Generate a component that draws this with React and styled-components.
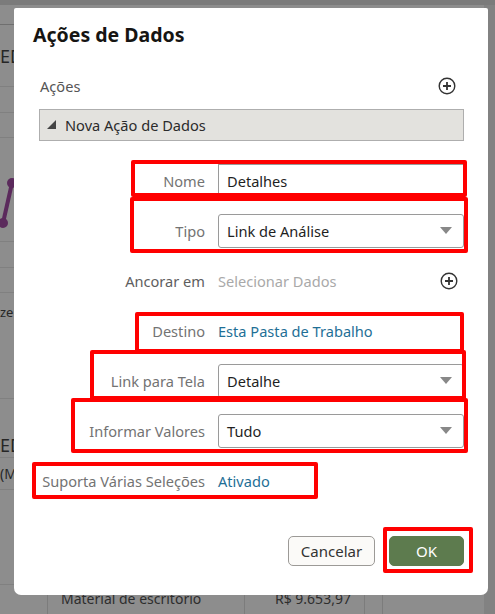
import React from "react";
import styled, { createGlobalStyle } from "styled-components";

const Global = createGlobalStyle`
  html, body { margin: 0; padding: 0; }
  body { width: 495px; height: 614px; overflow: hidden; font-family: "Noto Sans", "Open Sans", sans-serif; }
  * { box-sizing: border-box; }
`;

const Page = styled.div`
  position: relative;
  width: 495px;
  height: 614px;
  overflow: hidden;
  background: #8d8d8d;
  display: grid;
  grid-template-columns: 1fr 11px;
`;

const BgMain = styled.div`
  display: flex;
  flex-direction: column;
`;

const BgStrip = styled.div`
  background: #828282;
  border-top: 5px solid #7b7b7b;
`;

const BgTop = styled.div`
  height: 5px;
  background: #7b7b7b;
  flex: none;
`;

const BgRow = styled.div`
  height: ${(p) => p.$h}px;
  flex: none;
  border-bottom: 1px solid ${(p) => (p.$dark ? "#6f6f6f" : "#808080")};
  display: flex;
  align-items: ${(p) => p.$align || "center"};
  padding-top: ${(p) => p.$pt || 0}px;
  color: #262626;
  font-size: ${(p) => p.$fs || 14}px;
  overflow: hidden;
  white-space: nowrap;
`;

const BgTableRow = styled.div`
  flex: 1;
  display: grid;
  grid-template-columns: 48px 197px 120px 18px 1fr;
  color: #2e2e2e;
  font-size: 14px;
`;

const BgCell = styled.div`
  border-right: 1px solid #7c7c7c;
  padding: 4px 0 0 ${(p) => p.$pl || 0}px;
  white-space: nowrap;
`;

const Dialog = styled.div`
  position: absolute;
  left: 14px;
  top: 8px;
  width: 474px;
  height: 587px;
  background: #ffffff;
  border-radius: 2px 2px 7px 7px;
  display: flex;
  flex-direction: column;
  padding: 0 24px 0 25px;
`;

const Title = styled.h1`
  margin: 15px 0 0 -6px;
  font-size: 19.5px;
  font-weight: 700;
  color: #161513;
  line-height: 24px;
`;

const SectionHead = styled.div`
  margin-top: 25px;
  height: 28px;
  display: flex;
  align-items: center;
  justify-content: space-between;
  padding-left: 1px;
  padding-right: 8px;
  font-size: 14.6px;
  color: #555;
`;

const Collapsible = styled.div`
  margin-top: 9px;
  height: 32px;
  background: #e3e2de;
  border: 1px solid #aeaeae;
  display: flex;
  align-items: center;
  gap: 8px;
  padding-left: 7px;
  font-size: 14.6px;
  color: #2b2b2b;
`;

const Form = styled.div`
  margin-top: 23px;
  display: grid;
  grid-template-columns: 166px 1fr;
  grid-auto-rows: 34px;
  column-gap: 13px;
  row-gap: 16px;
  font-size: 14.6px;
`;

const Label = styled.div`
  display: flex;
  align-items: center;
  justify-content: flex-end;
  color: ${(p) => (p.$dark ? "#5e5e5e" : "#737373")};
  white-space: nowrap;
`;

const Field = styled.div`
  display: flex;
  align-items: center;
  justify-content: space-between;
  padding: 0 11px 0 8px;
  border: 1px solid #9a9a9a;
  border-radius: ${(p) => (p.$plain ? 0 : 3)}px;
  color: #1f1f1f;
  background: #fff;
`;

const Value = styled.div`
  display: flex;
  align-items: center;
  justify-content: space-between;
  padding-right: 6px;
  color: ${(p) => p.$color};
  white-space: nowrap;
`;

const Footer = styled.div`
  margin-top: auto;
  margin-bottom: 29px;
  display: flex;
  justify-content: flex-end;
  gap: 14px;
`;

const Button = styled.button`
  height: 30px;
  width: ${(p) => p.$w}px;
  border-radius: 5px;
  font-family: inherit;
  font-size: 15px;
  cursor: pointer;
  border: 1px solid ${(p) => (p.$primary ? "#5d7b4e" : "#9c9a97")};
  background: ${(p) => (p.$primary ? "#5d7b4e" : "#fbfaf8")};
  color: ${(p) => (p.$primary ? "#ffffff" : "#333")};
`;

const Mark = styled.div`
  position: absolute;
  border: 4px solid #ff0000;
  border-radius: 2px;
  pointer-events: none;
`;

const PlusIcon = () => (
  <svg width="18" height="18" viewBox="0 0 18 18">
    <circle cx="9" cy="9" r="7.8" fill="none" stroke="#333" strokeWidth="1.4" />
    <path d="M9 5v8M5 9h8" stroke="#333" strokeWidth="1.8" />
  </svg>
);

const Caret = () => (
  <svg width="10" height="10" viewBox="0 0 10 10">
    <polygon points="0,9 9,9 9,0" fill="#444" />
  </svg>
);

const Arrow = () => (
  <svg width="12" height="8" viewBox="0 0 12 8">
    <polygon points="0,0 12,0 6,7" fill="#888" />
  </svg>
);

const Chart = () => (
  <svg width="20" height="60" viewBox="0 0 20 60" style={{ display: "block" }}>
    <path d="M3 45 L12 5" stroke="#5b2a5c" strokeWidth="4" />
    <circle cx="12" cy="5" r="5" fill="#5b2a5c" />
    <circle cx="3" cy="45" r="5" fill="#5b2a5c" />
  </svg>
);

const marks = [
  { l: 131, t: 160, w: 336, h: 37 },
  { l: 130, t: 197, w: 338, h: 56 },
  { l: 135, t: 312, w: 329, h: 41 },
  { l: 90, t: 350, w: 376, h: 50 },
  { l: 71, t: 398, w: 397, h: 55 },
  { l: 32, t: 462, w: 286, h: 37 },
  { l: 383, t: 527, w: 90, h: 46 },
];

export default function App() {
  return (
    <>
      <Global />
      <Page>
        <BgMain>
          <BgTop />
          <BgRow $h={20} $dark />
          <BgRow $h={62} $fs={18}>ED</BgRow>
          <BgRow $h={26} />
          <BgRow $h={25} />
          <BgRow $h={104} $align="flex-start" $pt={40}><Chart /></BgRow>
          <BgRow $h={26} />
          <BgRow $h={25} />
          <BgRow $h={106} $align="flex-start" $pt={10} $fs={13}>ze</BgRow>
          <BgRow $h={59} $align="flex-end" $fs={18}>ED</BgRow>
          <BgRow $h={32} $fs={14}>(M</BgRow>
          <BgRow $h={95} />
          <BgTableRow>
            <BgCell />
            <BgCell $pl={13}>Material de escritório</BgCell>
            <BgCell $pl={30}>R$ 9.653,97</BgCell>
            <BgCell />
            <div />
          </BgTableRow>
        </BgMain>
        <BgStrip />

        <Dialog>
          <Title>Ações de Dados</Title>
          <SectionHead>
            <span>Ações</span>
            <PlusIcon />
          </SectionHead>
          <Collapsible>
            <Caret />
            <span>Nova Ação de Dados</span>
          </Collapsible>
          <Form>
            <Label>Nome</Label>
            <Field $plain>Detalhes</Field>

            <Label>Tipo</Label>
            <Field>Link de Análise<Arrow /></Field>

            <Label $dark>Ancorar em</Label>
            <Value $color="#a9a9a9">Selecionar Dados<PlusIcon /></Value>

            <Label>Destino</Label>
            <Value $color="#1f6f96">Esta Pasta de Trabalho</Value>

            <Label>Link para Tela</Label>
            <Field>Detalhe<Arrow /></Field>

            <Label>Informar Valores</Label>
            <Field>Tudo<Arrow /></Field>

            <Label>Suporta Várias Seleções</Label>
            <Value $color="#1f6f96">Ativado</Value>
          </Form>
          <Footer>
            <Button $w={87}>Cancelar</Button>
            <Button $w={75} $primary>OK</Button>
          </Footer>
        </Dialog>

        {marks.map((m, i) => (
          <Mark key={i} style={{ left: m.l, top: m.t, width: m.w, height: m.h }} />
        ))}
      </Page>
    </>
  );
}
